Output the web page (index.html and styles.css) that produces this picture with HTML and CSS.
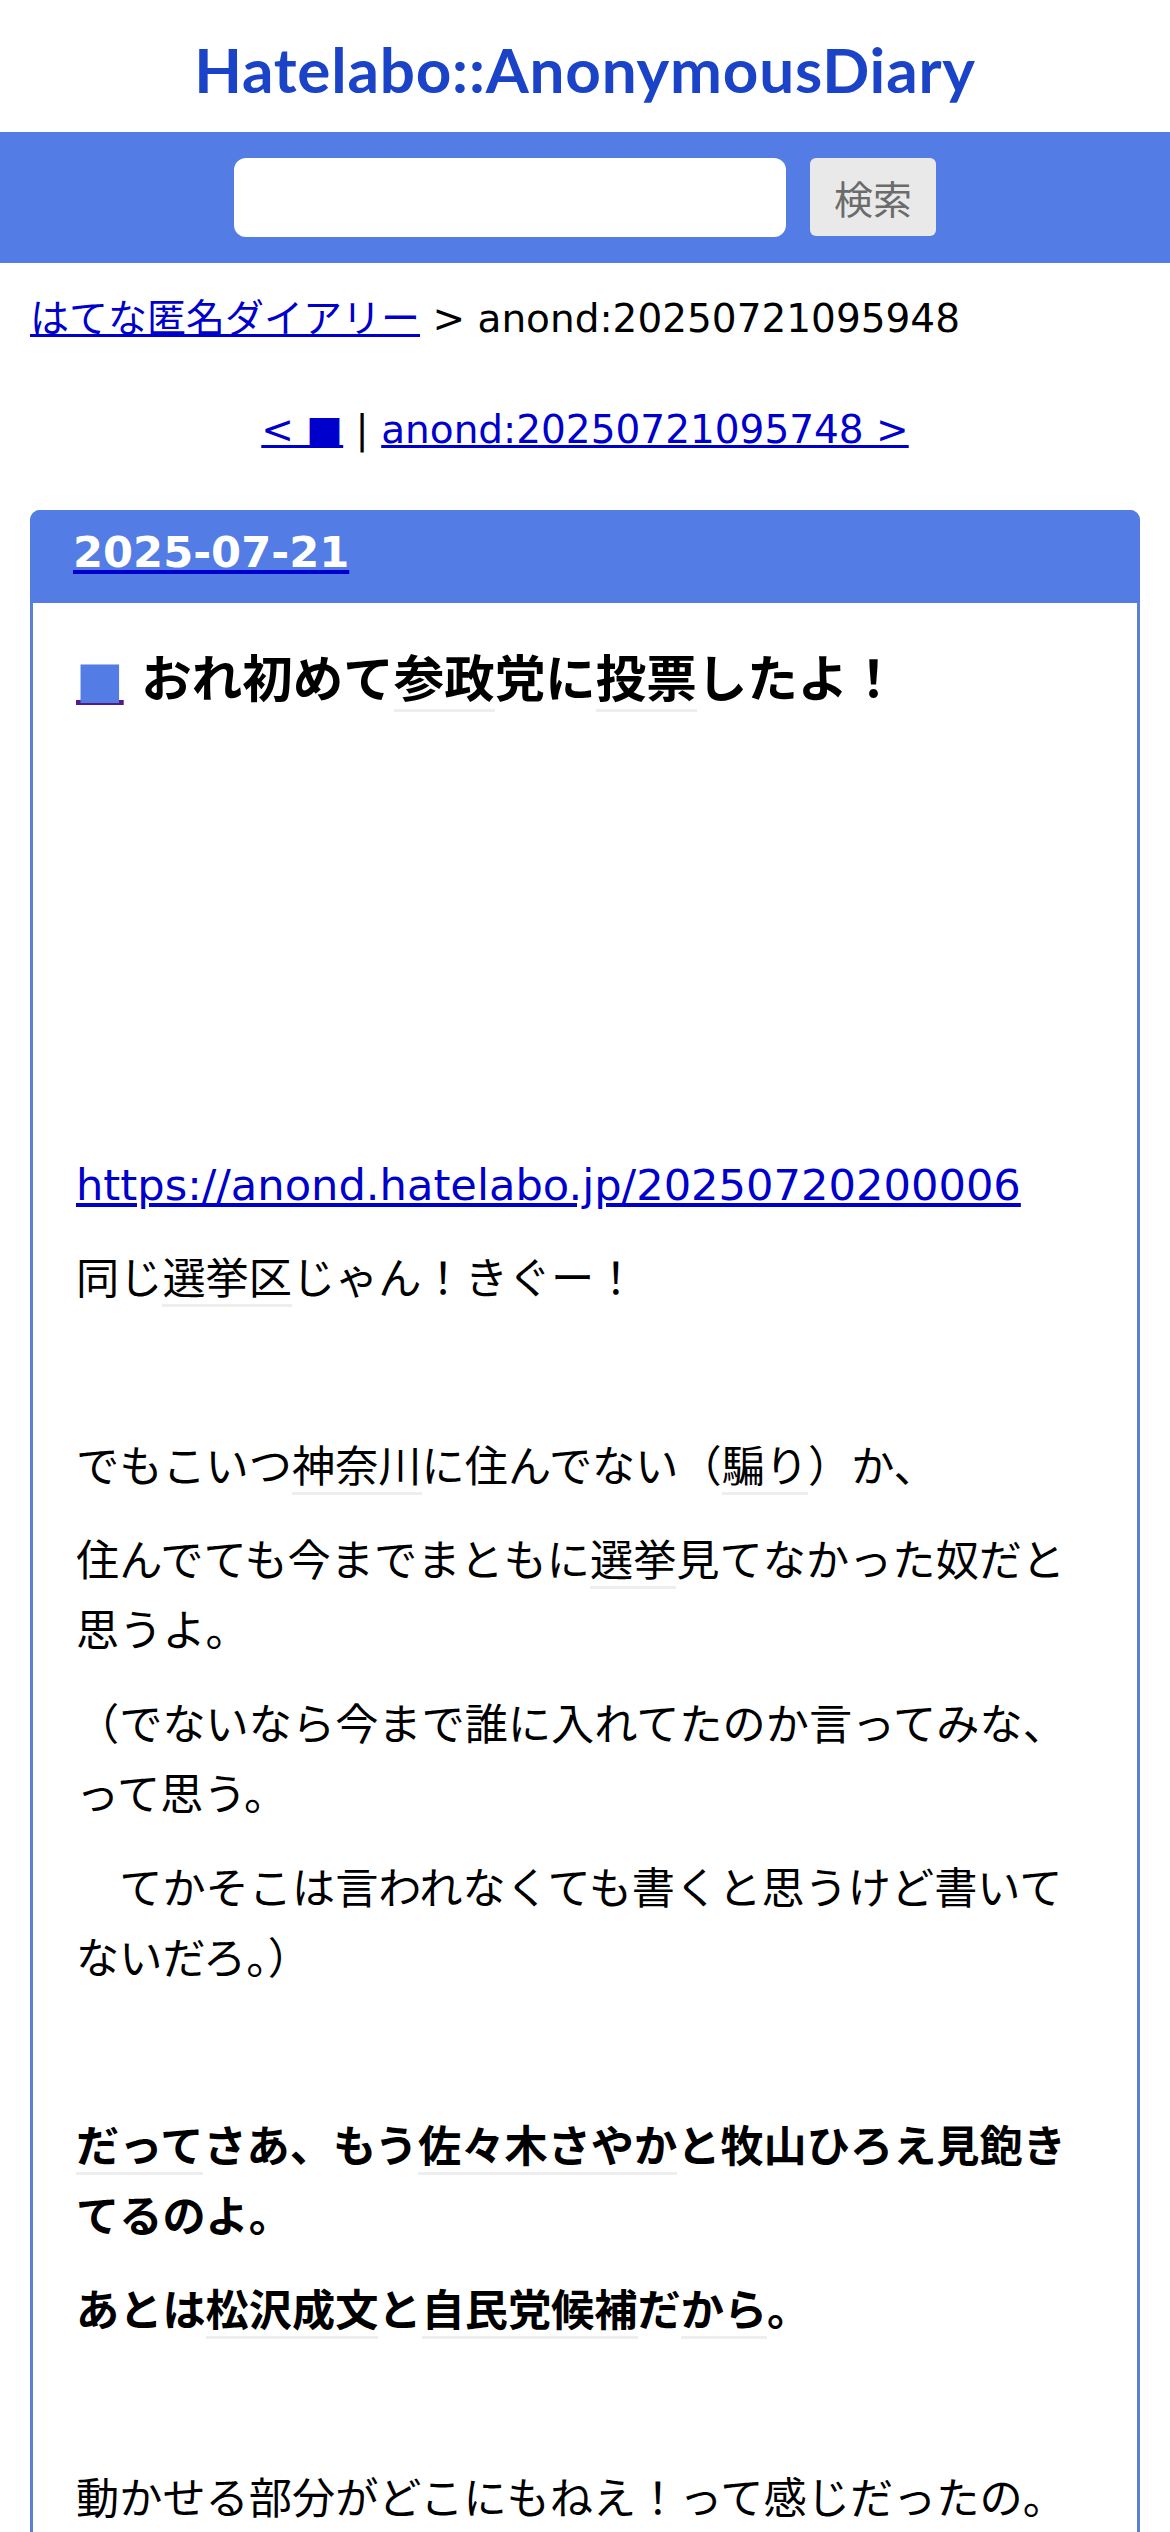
FILE: index.html
```html
<!DOCTYPE html>
<html lang="ja">
<head>
    <meta charset="UTF-8">
    <meta name="viewport" content="width=device-width, initial-scale=1.0">
    <title>おれ初めて参政党に投票したよ！ - はてな匿名ダイアリー</title>
    <link rel="stylesheet" href="styles.css">
</head>
<body>
    <div id="banner">
        <h1 class="logo">Hatelabo::AnonymousDiary</h1>
    </div>

    <form class="search-bar" onsubmit="return false;">
        <input type="text" class="search-input" name="word">
        <button type="submit" class="search-button">検索</button>
    </form>

    <div class="content">
        <div class="breadcrumb"><a href="#">はてな匿名ダイアリー</a> &gt; anond:20250721095948</div>

        <div class="pager"><a href="#">&lt; ■</a> | <a href="#">anond:20250721095748 &gt;</a></div>

        <div class="day">
            <h2 class="day-title"><a href="#">2025-07-21</a></h2>
            <div class="section">
                <h3 class="entry-title"><a href="#" class="sanchor">■</a> おれ初めて<a class="keyword" href="#">参政</a>党に<a class="keyword" href="#">投票</a>したよ！</h3>

                <div class="ad-space"></div>

                <p><a href="#">https://anond.hatelabo.jp/20250720200006</a></p>
                <p>同じ<a class="keyword" href="#">選挙区</a>じゃん！きぐー！</p>
                <p><br></p>
                <p>でもこいつ<a class="keyword" href="#">神奈川</a>に住んでない（<a class="keyword" href="#">騙り</a>）か、</p>
                <p>住んでても今までまともに<a class="keyword" href="#">選挙</a>見てなかった奴だと思うよ。</p>
                <p>（でないなら今まで誰に入れてたのか言ってみな、って思う。</p>
                <p>　てかそこは言われなくても書くと思うけど書いてないだろ。）</p>
                <p><br></p>
                <p><b><a class="keyword" href="#">だって</a>さあ、もう<a class="keyword" href="#">佐々木さやか</a>と牧山ひろえ見飽きてるのよ。</b></p>
                <p><b>あとは<a class="keyword" href="#">松沢成文</a>と<a class="keyword" href="#">自民党候補</a>だ<a class="keyword" href="#">から</a>。</b></p>
                <p><br></p>
                <p>動かせる部分がどこにもねえ！って感じだったの。</p>
            </div>
        </div>
    </div>
</body>
</html>
```

FILE: styles.css
```css
body {
    margin: 0;
    font-family: "DejaVu Sans", "Noto Sans CJK JP", sans-serif;
    font-size: 43.2px;
    color: #000;
    background-color: #fff;
}

a {
    color: #0000cc;
}

#banner {
    height: 132px;
    display: flex;
    align-items: center;
    justify-content: center;
}

.logo {
    margin: 6px 0 0;
    font-family: Lato, sans-serif;
    font-weight: 700;
    font-size: 62px;
    line-height: 1;
    letter-spacing: 0.8px;
    color: #1b43c8;
}

.search-bar {
    display: flex;
    align-items: flex-start;
    justify-content: center;
    gap: 24px;
    margin: 0;
    padding: 26px 0;
    background-color: #537ce4;
}

.search-input {
    width: 552px;
    height: 79px;
    box-sizing: border-box;
    border: none;
    border-radius: 12px;
    background: #fff;
}

.search-button {
    width: 126px;
    height: 78px;
    padding: 0;
    border: none;
    border-radius: 6px;
    background-color: #e9e9e9;
    color: #6b6b6b;
    font-family: "Noto Sans CJK JP", sans-serif;
    font-size: 39px;
}

.content {
    padding: 0 30px;
}

.breadcrumb {
    margin-top: 24px;
    font-size: 39px;
    line-height: 63px;
}

.pager {
    margin: 48px 0 49px;
    text-align: center;
    font-size: 39px;
    line-height: 63px;
}

.day {
    border: 3px solid #5b80d6;
    border-radius: 10px 10px 0 0;
}

.day-title {
    margin: -3px -3px 0;
    padding: 16px 40px 25px 43px;
    font-size: 43.2px;
    line-height: 52px;
    background-color: #537ce4;
    border-radius: 10px 10px 0 0;
}

.day-title a {
    color: #fff;
    text-decoration-color: #0000cc;
}

.section {
    padding: 36px 43px 40px;
}

.entry-title {
    margin: 0;
    font-size: 50.5px;
    line-height: 82px;
}

.sanchor {
    color: #537ce4;
    text-decoration-color: #551a8b;
}

.ad-space {
    height: 429px;
}

.section p {
    margin: 0 0 24px;
    line-height: 70px;
}

.keyword {
    color: #000;
    text-decoration: none;
    border-bottom: 3px solid #eee;
}
```
